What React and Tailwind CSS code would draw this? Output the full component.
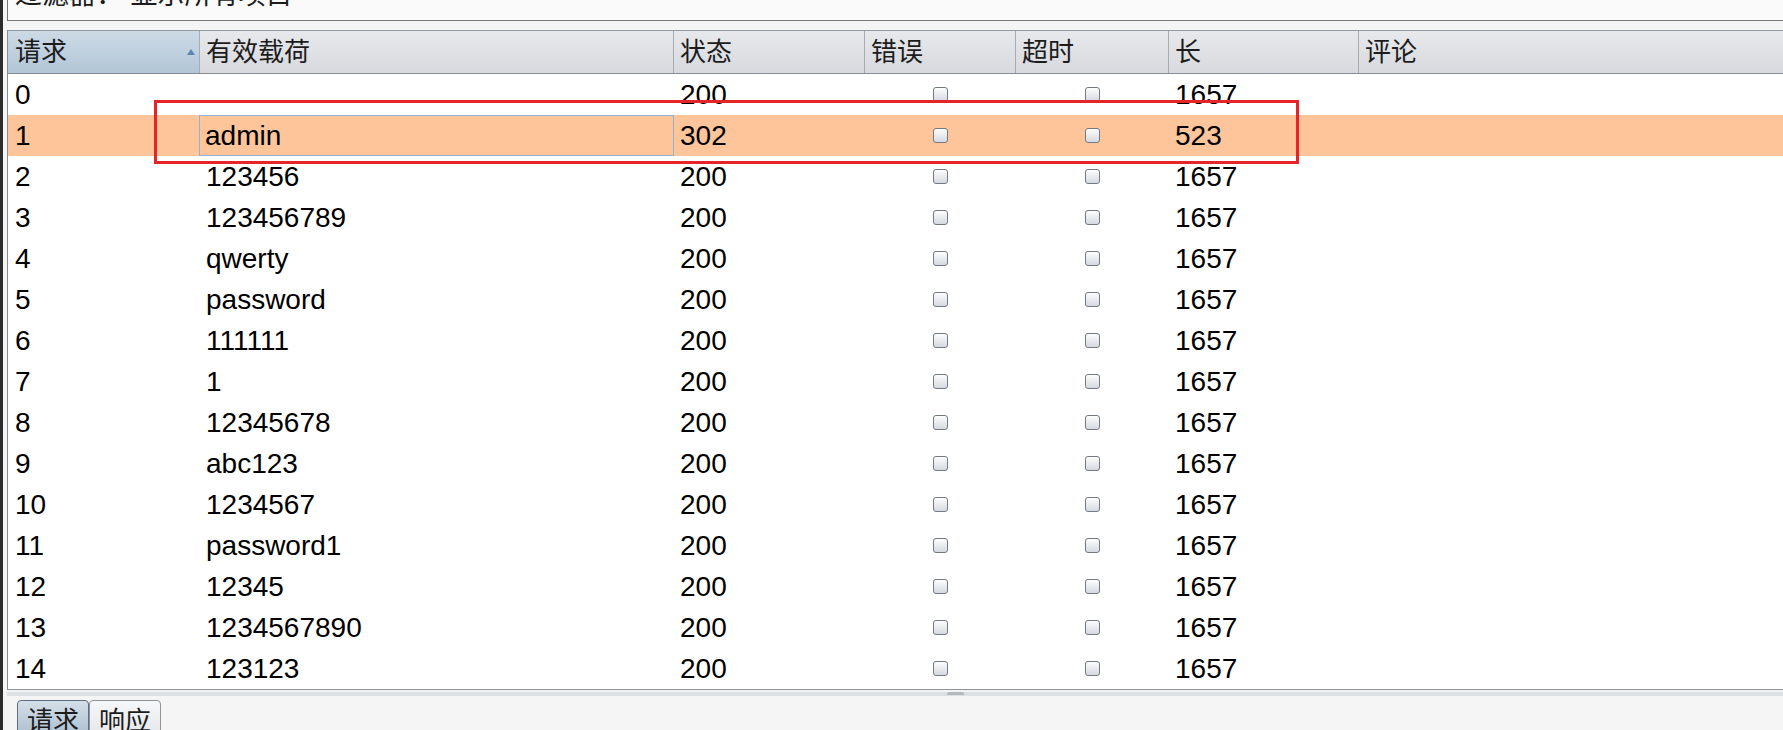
const font = "font-['Liberation_Sans','Noto_Sans_CJK_SC',sans-serif]";

// column widths, px (including the 1px separator on the right)
const W = ["w-[192px]", "w-[474px]", "w-[191px]", "w-[151px]", "w-[153px]", "w-[190px]"];

const payloads = [
  "",
  "admin",
  "123456",
  "123456789",
  "qwerty",
  "password",
  "111111",
  "1",
  "12345678",
  "abc123",
  "1234567",
  "password1",
  "12345",
  "1234567890",
  "123123",
];

function Checkbox() {
  return (
    <span className="block w-[15px] h-[15px] rounded-[3px] border border-[#737a84] bg-linear-to-b from-[#fdfdfd] to-[#d5d9e0]" />
  );
}

function HeaderCell({ w, children }) {
  return (
    <div
      className={`${w} shrink-0 flex items-center pl-[6px] text-[26px] text-[#1c1c1c] border-r border-[#a7abb2]`}
    >
      {children}
    </div>
  );
}

function Row({ index, payload, status, length, selected }) {
  return (
    <div
      className={`flex h-[41px] items-center text-[28px] text-black ${
        selected ? "bg-[#fec59a]" : ""
      }`}
    >
      <div className={`${W[0]} shrink-0 pl-[7px]`}>{index}</div>
      {selected ? (
        <div className="w-[475px] -ml-px shrink-0 h-full flex items-center pl-[5px] border border-[#8eb1d6]">
          {payload}
        </div>
      ) : (
        <div className={`${W[1]} shrink-0 pl-[6px]`}>{payload}</div>
      )}
      <div className={`${W[2]} shrink-0 pl-[6px]`}>{status}</div>
      <div className={`${W[3]} shrink-0 flex justify-center`}>
        <Checkbox />
      </div>
      <div className={`${W[4]} shrink-0 flex justify-center`}>
        <Checkbox />
      </div>
      <div className={`${W[5]} shrink-0 pl-[6px]`}>{length}</div>
      <div className="flex-1" />
    </div>
  );
}

export default function App() {
  return (
    <div className={`w-[1783px] h-[730px] flex overflow-hidden bg-[#f5f5f5] ${font}`}>
      <div className="w-[3px] shrink-0 bg-[#2b2b2b]" />
      <div className="flex-1 flex flex-col pl-[4px]">
        {/* filter bar */}
        <div className="h-[21px] shrink-0 overflow-hidden border-l border-b border-[#767676] bg-[#fafafa]">
          <div className="mt-[-18px] pl-[7px] leading-[27px] text-[27px] text-[#1c1c1c] whitespace-pre">
            过滤器： 显示所有项目
          </div>
        </div>

        <div className="h-[9px] shrink-0" />

        {/* results table */}
        <div className="shrink-0 border-l border-[#8a8e94] bg-white">
          <div className="flex h-[44px] border-t border-b border-t-[#959aa1] border-b-[#878c93] bg-linear-to-b from-[#e8e9ec] to-[#d7d9de]">
            <div className="w-[192px] shrink-0 relative flex items-center pl-[7px] text-[26px] text-[#1c1c1c] border-r border-[#a7abb2] bg-linear-to-b from-[#cddae6] to-[#b2c6d7]">
              请求
              <svg
                className="absolute right-[4px] top-[18px]"
                width="8"
                height="6"
                viewBox="0 0 8 6"
              >
                <path d="M4 0 L8 6 L0 6 Z" fill="#5b86b0" />
              </svg>
            </div>
            <HeaderCell w={W[1]}>有效载荷</HeaderCell>
            <HeaderCell w={W[2]}>状态</HeaderCell>
            <HeaderCell w={W[3]}>错误</HeaderCell>
            <HeaderCell w={W[4]}>超时</HeaderCell>
            <HeaderCell w={W[5]}>长</HeaderCell>
            <div className="flex-1 flex items-center pl-[6px] text-[26px] text-[#1c1c1c]">
              评论
            </div>
          </div>

          <div className="relative border-b border-[#8f9399]">
            {payloads.map((p, i) => (
              <Row
                key={i}
                index={i}
                payload={p}
                status={i === 1 ? "302" : "200"}
                length={i === 1 ? "523" : "1657"}
                selected={i === 1}
              />
            ))}
            <div className="absolute left-[146px] top-[26px] w-[1145px] h-[64px] border-[3px] border-[#e4262b]" />
          </div>
        </div>

        {/* splitter */}
        <div className="h-[2px] shrink-0 bg-[#f1f2f4]" />
        <div className="relative h-[4px] shrink-0 bg-[#dcdfe4]">
          <div className="absolute left-[940px] top-0 w-[17px] h-[3px] rounded-t-[2px] bg-[#b4b8be]" />
        </div>

        {/* bottom tabs */}
        <div className="flex-1 min-h-0 overflow-hidden pt-[4px] pl-[10px] flex items-start">
          <div className="h-[40px] px-[9px] pt-[3px] rounded-t-[4px] border border-[#5f6f80] bg-linear-to-b from-[#d5dfe9] to-[#a8bbcc] text-[26px] leading-[34px] text-[#1c1c1c]">
            请求
          </div>
          <div className="h-[40px] px-[9px] pt-[3px] rounded-t-[4px] border border-[#8e9399] bg-linear-to-b from-[#f6f7f8] to-[#e3e5e8] text-[26px] leading-[34px] text-[#1c1c1c]">
            响应
          </div>
        </div>
      </div>
    </div>
  );
}
